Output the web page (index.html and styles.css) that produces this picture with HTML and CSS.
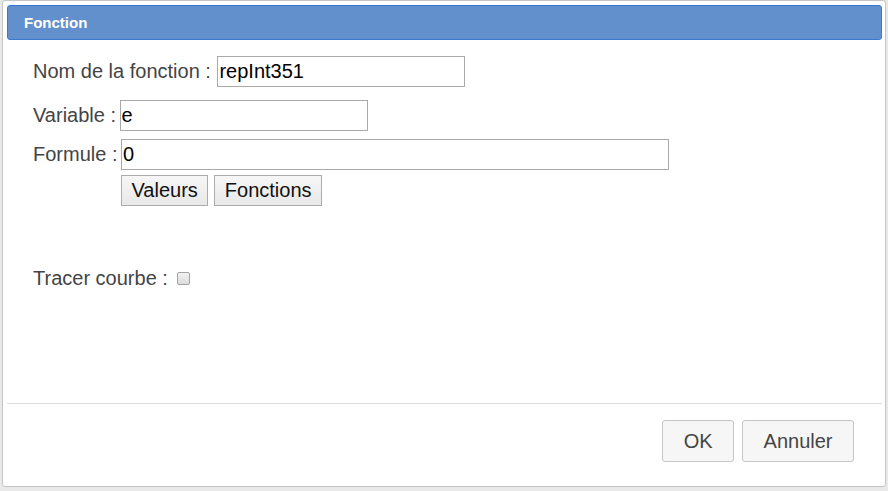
FILE: index.html
```html
<!DOCTYPE html>
<html lang="fr">
<head>
<meta charset="utf-8">
<title>Fonction</title>
<link rel="stylesheet" href="styles.css">
</head>
<body>
<div class="dialog">
  <div class="titlebar">Fonction</div>
  <div class="content">
    <div class="row row-nom">
      <label class="lbl">Nom de la fonction :&nbsp;</label>
      <input class="field field-short" type="text" value="repInt351">
    </div>
    <div class="row row-var">
      <label class="lbl">Variable :&nbsp;</label>
      <input class="field field-short" type="text" value="e">
    </div>
    <div class="row row-form">
      <label class="lbl">Formule :&nbsp;</label>
      <input class="field field-long" type="text" value="0">
    </div>
    <div class="row row-btns">
      <button class="small-btn">Valeurs</button>
      <button class="small-btn">Fonctions</button>
    </div>
    <div class="row row-trace">
      <label class="lbl">Tracer courbe :&nbsp;</label>
      <input class="check" type="checkbox">
    </div>
  </div>
  <div class="buttonpane">
    <button class="ui-btn">OK</button>
    <button class="ui-btn">Annuler</button>
  </div>
</div>
</body>
</html>
```
FILE: styles.css
```css
html, body {
  margin: 0;
  padding: 0;
  background: #e9e9e9;
  height: 491px;
  overflow: hidden;
}
body {
  font-family: "Liberation Sans", Arial, sans-serif;
}
.dialog {
  box-sizing: border-box;
  margin-left: 2px;
  width: 884px;
  height: 487px;
  background: #fff;
  border: 1px solid #c5c5c5;
  border-radius: 3px;
  padding: 4px 3px 0 4px;
  display: flex;
  flex-direction: column;
}
.titlebar {
  box-sizing: border-box;
  height: 35px;
  background: #6290cd;
  border: 1px solid #3b78d0;
  border-radius: 3px;
  color: #fff;
  font-weight: bold;
  font-size: 15px;
  line-height: 33px;
  padding-left: 16px;
}
.content {
  flex: 1;
  padding-left: 26px;
  color: #444;
  font-size: 20px;
}
.row {
  display: flex;
  align-items: center;
}
.row-nom { margin-top: 16px; }
.row-var { margin-top: 13px; }
.row-form { margin-top: 8px; }
.row-btns { margin-top: 5px; padding-left: 88px; gap: 6px; }
.row-trace { margin-top: 61px; }
.lbl {
  white-space: pre;
}
.row-nom .field { margin-left: 1px; }
.row-var .field,
.row-form .field { margin-left: -2px; }
.field {
  box-sizing: border-box;
  height: 31px;
  border: 1px solid #a9a9a9;
  font-family: "Liberation Sans", Arial, sans-serif;
  font-size: 20px;
  color: #000;
  padding: 0 1px;
  margin: 0;
  outline: none;
}
.field-short { width: 248px; }
.field-long { width: 548px; }
.small-btn {
  box-sizing: border-box;
  height: 31px;
  padding: 0 9.5px;
  margin: 0;
  font-family: "Liberation Sans", Arial, sans-serif;
  font-size: 20px;
  color: #111;
  background: linear-gradient(#f7f7f7, #e8e8e8);
  border: 1px solid #acacac;
  border-radius: 0;
}
.check {
  appearance: none;
  -webkit-appearance: none;
  box-sizing: border-box;
  width: 13px;
  height: 13px;
  margin: 0 0 0 4px;
  border: 1px solid #a3a3a3;
  border-radius: 2px;
  background: linear-gradient(#f2f2f2, #dcdcdc);
}
.buttonpane {
  box-sizing: border-box;
  height: 83px;
  border-top: 1px solid #dddddd;
  padding: 16px 28px 0 0;
  display: flex;
  justify-content: flex-end;
  align-items: flex-start;
  gap: 8px;
}
.ui-btn {
  box-sizing: border-box;
  height: 42px;
  padding: 0 20.5px;
  margin: 0;
  font-family: "Liberation Sans", Arial, sans-serif;
  font-size: 20px;
  color: #454545;
  background: #f6f6f6;
  border: 1px solid #c5c5c5;
  border-radius: 3px;
}
```
